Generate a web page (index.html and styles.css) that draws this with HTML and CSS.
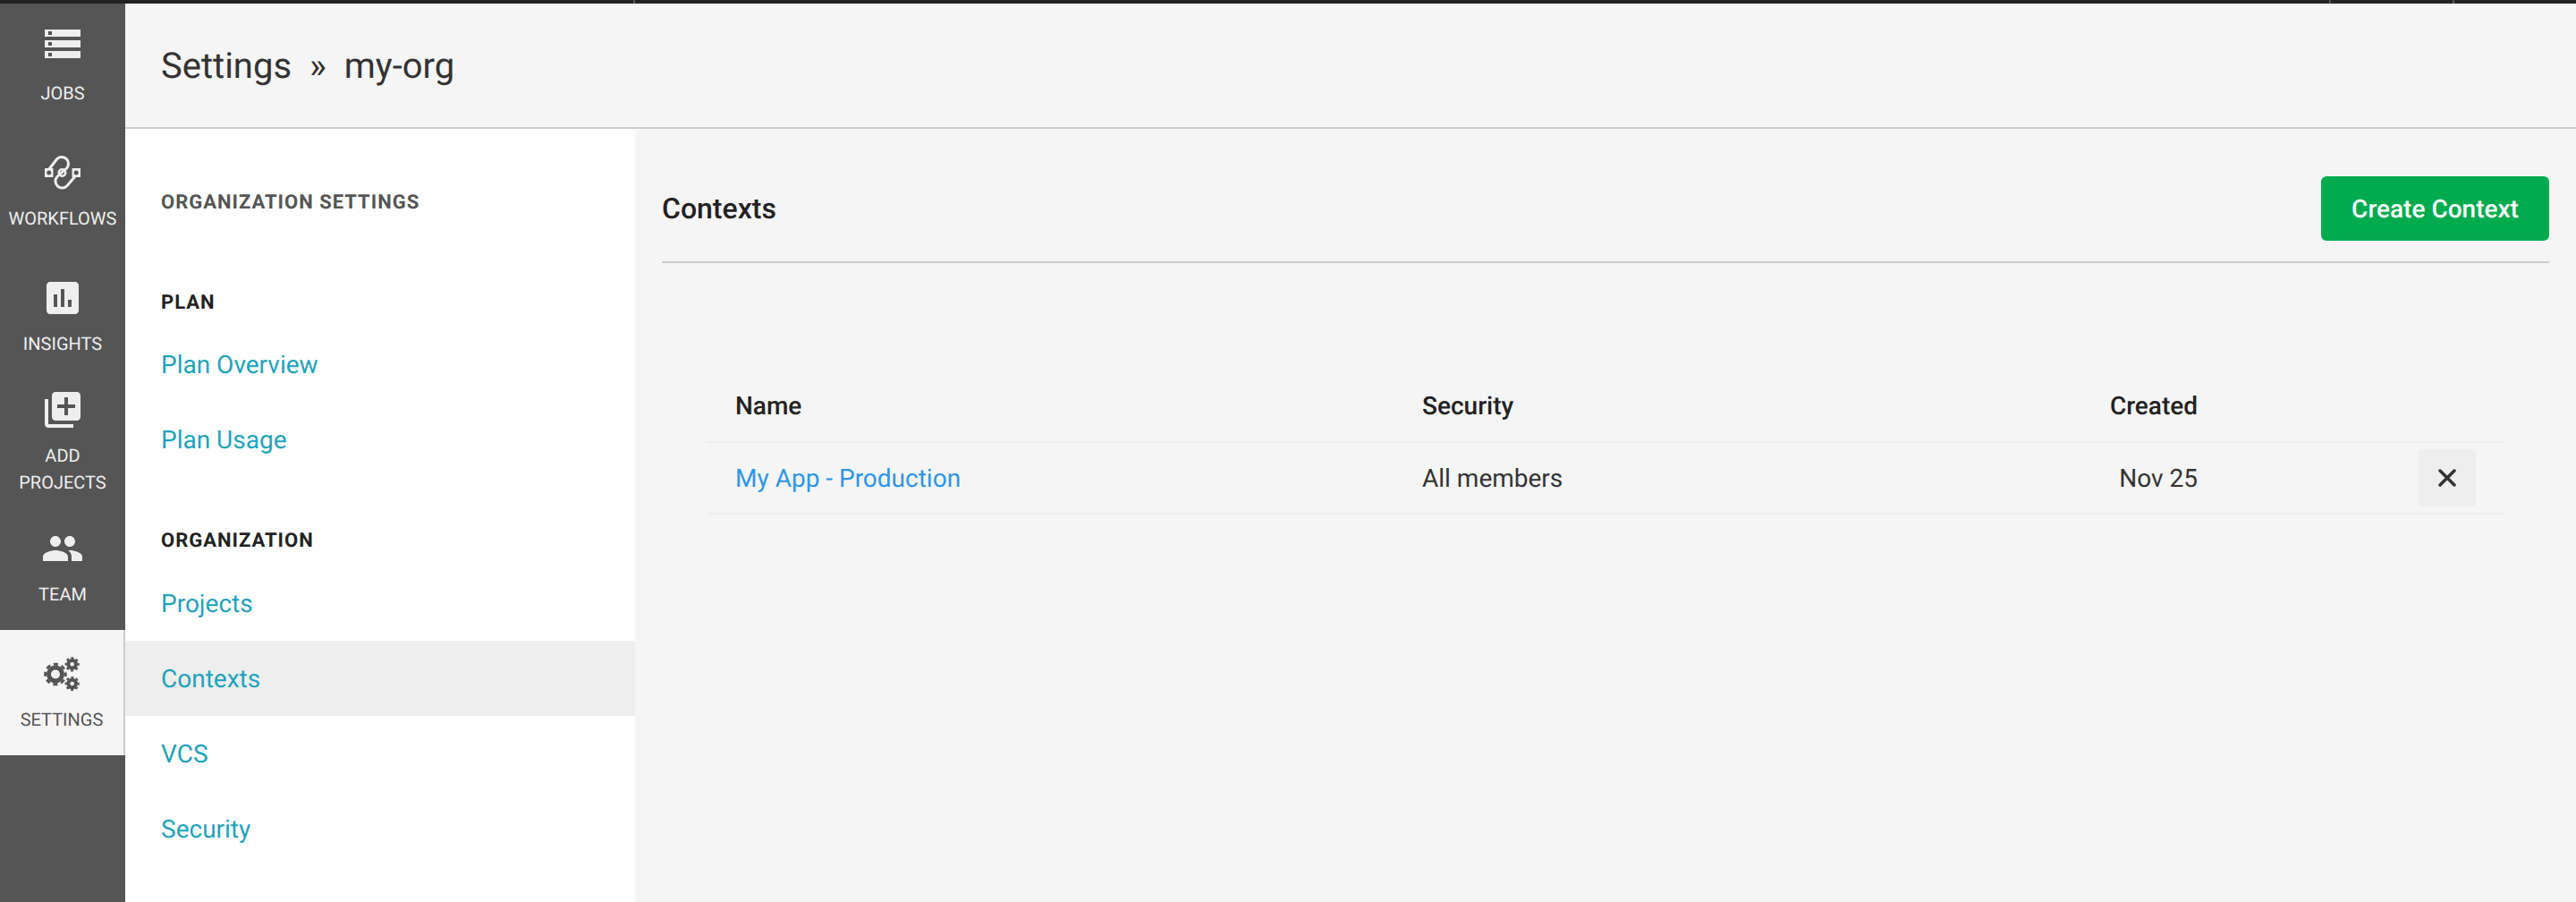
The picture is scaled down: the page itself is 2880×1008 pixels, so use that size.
FILE: index.html
```html
<!DOCTYPE html>
<html lang="en">
<head>
    <meta charset="UTF-8">
    <title>Settings - my-org</title>
    <link rel="stylesheet" href="styles.css">
</head>
<body>
    <div class="topbar">
        <span class="topbar-tick tick-a"></span>
        <span class="topbar-tick tick-b"></span>
        <span class="topbar-tick tick-c"></span>
    </div>
    <div class="app">
        <nav class="sidenav">
            <a class="sidenav-item" href="#">
                <svg class="sidenav-icon" viewBox="0 0 48 48"><path fill-rule="evenodd" d="M4 4h40v8H4zM8 6v4h4V6zM4 16h40v8H4zM8 18v4h4v-4zM4 28h40v8H4zM8 30v4h4v-4z"/></svg>
                <span>Jobs</span>
            </a>
            <a class="sidenav-item" href="#">
                <svg class="sidenav-icon" viewBox="0 0 48 48">
                    <path class="wf-line" d="M9 20L17.400 9A7.500 7.500 0 0 1 28.600 19L17.900 28.500A7.500 7.500 0 0 0 29.100 38.500L38 28"/>
                    <path fill-rule="evenodd" d="M4 19h9.500v10H4zM8.750 21.500a2.500 2.500 0 1 0 0 5 2.500 2.500 0 0 0 0-5zM34.500 19H44v10h-9.500zM39.250 21.500a2.500 2.500 0 1 0 0 5 2.500 2.500 0 0 0 0-5zM23.500 19a5 5 0 1 1 0 10 5 5 0 0 1 0-10zM23.500 21.500a2.500 2.500 0 1 0 0 5 2.500 2.500 0 0 0 0-5z"/>
                </svg>
                <span>Workflows</span>
            </a>
            <a class="sidenav-item" href="#">
                <svg class="sidenav-icon" viewBox="0 0 24 24"><path d="M19 3H5c-1.100 0-2 .9-2 2v14c0 1.100.9 2 2 2h14c1.100 0 2-.9 2-2V5c0-1.100-.9-2-2-2zM9 17H7v-7h2v7zm4 0h-2V7h2v10zm4 0h-2v-4h2v4z"/></svg>
                <span>Insights</span>
            </a>
            <a class="sidenav-item" href="#">
                <svg class="sidenav-icon" viewBox="0 0 24 24"><path d="M4 6H2v14c0 1.100.9 2 2 2h14v-2H4V6zm16-4H8c-1.100 0-2 .9-2 2v12c0 1.100.9 2 2 2h12c1.100 0 2-.9 2-2V4c0-1.100-.9-2-2-2zm-1 9h-4v4h-2v-4H9V9h4V5h2v4h4v2z"/></svg>
                <span>Add<br>Projects</span>
            </a>
            <a class="sidenav-item" href="#">
                <svg class="sidenav-icon" viewBox="0 0 24 24"><path d="M16 11c1.660 0 2.990-1.340 2.990-3S17.660 5 16 5c-1.660 0-3 1.340-3 3s1.340 3 3 3zm-8 0c1.660 0 2.990-1.340 2.990-3S9.660 5 8 5C6.340 5 5 6.340 5 8s1.340 3 3 3zm0 2c-2.330 0-7 1.170-7 3.500V19h14v-2.500c0-2.330-4.670-3.500-7-3.500zm8 0c-.29 0-.62.02-.97.05 1.160.84 1.970 1.970 1.970 3.450V19h6v-2.500c0-2.330-4.670-3.500-7-3.500z"/></svg>
                <span>Team</span>
            </a>
            <a class="sidenav-item active" href="#">
                <svg class="sidenav-icon" viewBox="0 0 48 48">
                    <g class="gear">
                        <circle cx="16" cy="24.500" r="7.500" stroke-width="5"/>
                        <circle cx="16" cy="24.500" r="11.300" stroke-width="3" stroke-dasharray="5 3.875" stroke-dashoffset="2.500"/>
                        <circle cx="34.700" cy="13.300" r="4.300" stroke-width="4"/>
                        <circle cx="34.700" cy="13.300" r="7" stroke-width="2.200" stroke-dasharray="3 2.498" stroke-dashoffset="1.500"/>
                        <circle cx="34.700" cy="35" r="4.300" stroke-width="4"/>
                        <circle cx="34.700" cy="35" r="7" stroke-width="2.200" stroke-dasharray="3 2.498" stroke-dashoffset="1.500"/>
                    </g>
                </svg>
                <span>Settings</span>
            </a>
        </nav>

        <div class="page">
            <header class="page-header">
                <h1>Settings <span class="crumb-sep">»</span> my-org</h1>
            </header>

            <div class="page-body">
                <aside class="settings-menu">
                    <h2 class="menu-title">Organization Settings</h2>

                    <h3 class="menu-heading first">Plan</h3>
                    <a class="menu-link" href="#">Plan Overview</a>
                    <a class="menu-link" href="#">Plan Usage</a>

                    <h3 class="menu-heading">Organization</h3>
                    <a class="menu-link" href="#">Projects</a>
                    <a class="menu-link current" href="#">Contexts</a>
                    <a class="menu-link" href="#">VCS</a>
                    <a class="menu-link" href="#">Security</a>
                </aside>

                <main class="content">
                    <div class="content-head">
                        <h2>Contexts</h2>
                        <button class="btn-create" type="button">Create Context</button>
                    </div>

                    <table class="contexts-table">
                        <thead>
                            <tr>
                                <th class="col-name">Name</th>
                                <th class="col-security">Security</th>
                                <th class="col-created">Created</th>
                                <th class="col-action"></th>
                            </tr>
                        </thead>
                        <tbody>
                            <tr>
                                <td class="col-name"><a href="#">My App - Production</a></td>
                                <td class="col-security">All members</td>
                                <td class="col-created">Nov 25</td>
                                <td class="col-action">
                                    <button class="btn-delete" type="button" aria-label="Delete">
                                        <svg viewBox="0 0 20 20"><path d="M2 2l16 16M18 2L2 18"/></svg>
                                    </button>
                                </td>
                            </tr>
                        </tbody>
                    </table>
                </main>
            </div>
        </div>
    </div>
</body>
</html>
```

FILE: styles.css
```css
:root {
    --dark-nav: #555555;
    --page-bg: #f5f5f5;
    --rule: #cccccc;
    --teal: #1fa3bd;
    --blue: #2e96e6;
}

html, body {
    height: 100%;
}

body {
    margin: 0;
    background-color: var(--page-bg);
    color: #222;
    font-family: 'Roboto', sans-serif;
    text-rendering: geometricPrecision;
    overflow: hidden;
}

a {
    text-decoration: none;
}

.topbar {
    height: 4px;
    background-color: #222;
    display: flex;
}

.topbar-tick {
    width: 2px;
    background-color: #555;
}

.tick-a {
    margin-left: 708px;
}

.tick-b {
    margin-left: 1894px;
}

.tick-c {
    margin-left: 136px;
}

.app {
    display: flex;
    height: 1004px;
}

/* left dark nav */
.sidenav {
    width: 140px;
    flex-shrink: 0;
    background-color: var(--dark-nav);
}

.sidenav-item {
    height: 140px;
    box-sizing: border-box;
    display: flex;
    flex-direction: column;
    align-items: center;
    justify-content: center;
    gap: 12px;
    color: #eee;
    font-size: 20px;
    line-height: 30px;
    text-align: center;
    text-transform: uppercase;
}

.sidenav-icon {
    width: 48px;
    height: 48px;
    flex-shrink: 0;
    fill: #eee;
}

.sidenav-item.active {
    background-color: var(--page-bg);
    border-right: 2px solid var(--rule);
    color: var(--dark-nav);
}

.sidenav-item.active .sidenav-icon {
    margin-left: 2px;
}

.wf-line {
    fill: none;
    stroke: #eee;
    stroke-width: 3;
}

.gear circle {
    fill: none;
    stroke: var(--dark-nav);
}

.page {
    flex: 1;
    display: flex;
    flex-direction: column;
    min-width: 0;
}

.page-header {
    height: 138px;
    flex-shrink: 0;
    border-bottom: 2px solid var(--rule);
    display: flex;
    align-items: center;
    padding-left: 40px;
    background-color: var(--page-bg);
}

.page-header h1 {
    margin: 0;
    font-size: 40px;
    font-weight: 400;
    color: #333;
}

.crumb-sep {
    margin: 0 10px;
}

.page-body {
    flex: 1;
    display: flex;
    min-height: 0;
}

/* settings menu */
.settings-menu {
    width: 570px;
    flex-shrink: 0;
    background-color: #fff;
    display: flex;
    flex-direction: column;
}

.menu-title,
.menu-heading {
    margin: 0;
    padding-left: 40px;
    font-size: 22px;
    line-height: 30px;
    font-weight: 700;
    letter-spacing: 1px;
    text-transform: uppercase;
}

.menu-title {
    margin-top: 68px;
    color: var(--dark-nav);
}

.menu-heading {
    margin-top: 57px;
    margin-bottom: 12px;
    color: #222;
}

.menu-heading.first {
    margin-top: 82px;
    margin-bottom: 11px;
}

.menu-link {
    display: block;
    height: 84px;
    line-height: 86px;
    padding-left: 40px;
    font-size: 28px;
    color: var(--teal);
}

.menu-link.current {
    background-color: #eee;
}

/* main content */
.content {
    flex: 1;
    min-width: 0;
    padding: 0 30px;
}

.content-head {
    height: 148px;
    display: flex;
    justify-content: space-between;
    align-items: flex-end;
    border-bottom: 2px solid var(--rule);
}

.content-head h2 {
    margin: 0 0 23px;
    font-size: 32px;
    line-height: 72px;
    font-weight: 500;
    color: #222;
}

.btn-create {
    width: 255px;
    height: 72px;
    margin-bottom: 23px;
    border: 0;
    border-radius: 6px;
    background-color: #00ab4e;
    color: #fff;
    font-family: inherit;
    font-size: 28px;
    font-weight: 500;
    text-rendering: geometricPrecision;
    cursor: pointer;
}

.contexts-table {
    width: 2010px;
    margin: 122px 0 0 50px;
    border-collapse: collapse;
    font-size: 28px;
    table-layout: fixed;
}

.contexts-table th {
    height: 78px;
    padding: 0 0 2px;
    box-sizing: border-box;
    font-weight: 500;
    color: #222;
    text-align: left;
    border-bottom: 2px solid #eeeeee;
}

.contexts-table td {
    height: 78px;
    padding: 0;
    color: #333;
    border-bottom: 2px solid #eeeeee;
}

.contexts-table .col-name {
    width: 800px;
    padding-left: 32px;
    box-sizing: border-box;
}

.col-name a {
    color: var(--blue);
}

.col-security {
    width: 550px;
}

.contexts-table .col-created {
    width: 317px;
    text-align: right;
}

.contexts-table .col-action {
    text-align: right;
    padding-right: 32px;
}

.btn-delete {
    width: 64px;
    height: 64px;
    border: 0;
    padding: 0;
    border-radius: 4px;
    background-color: #eee;
    display: inline-flex;
    align-items: center;
    justify-content: center;
    vertical-align: middle;
    cursor: pointer;
}

.btn-delete svg {
    width: 20px;
    height: 20px;
}

.btn-delete path {
    fill: none;
    stroke: #333;
    stroke-width: 3.5;
    stroke-linecap: round;
}
```
